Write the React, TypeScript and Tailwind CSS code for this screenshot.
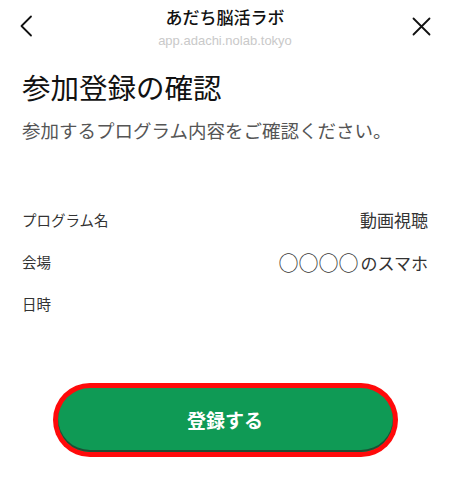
const rows = [
  { label: "プログラム名", value: <>動画視聴</> },
  {
    label: "会場",
    value: (
      <>
        <span className="mr-[2px] align-middle text-[20px] leading-[22px]">○○○○</span>
        <span className="align-middle">のスマホ</span>
      </>
    ),
  },
  { label: "日時", value: null },
]

export default function App() {
  return (
    <div className="min-h-[500px] w-[450px] bg-white font-['Noto_Sans_CJK_JP',sans-serif] text-[#222]">
      <header className="flex items-start justify-between">
        <div className="flex w-[60px] pl-[19px] pt-[15px]">
          <svg width="14" height="22" viewBox="0 0 14 22" fill="none">
            <path d="M12 1.5 L2.5 11 L12 20.5" stroke="#111" strokeWidth="1.8" strokeLinecap="round" strokeLinejoin="round" />
          </svg>
        </div>
        <div className="flex flex-col items-center pt-[7px]">
          <div className="text-[17px] font-medium leading-[20px] text-[#111]">あだち脳活ラボ</div>
          <div className="mt-[6px] font-['Liberation_Sans',sans-serif] text-[13px] leading-[16px] text-[#c9c9c9]">
            app.adachi.nolab.tokyo
          </div>
        </div>
        <div className="flex w-[60px] justify-end pr-[19px] pt-[17px]">
          <svg width="19" height="19" viewBox="0 0 19 19" fill="none">
            <path d="M1.5 1.5 L17.5 17.5 M17.5 1.5 L1.5 17.5" stroke="#111" strokeWidth="1.8" strokeLinecap="round" />
          </svg>
        </div>
      </header>

      <main className="px-[22px]">
        <h1 className="mt-[20px] text-[28.5px] font-normal leading-[36px] text-[#111]">参加登録の確認</h1>
        <p className="mt-[12px] text-[18.5px] leading-[26px] text-[#555]">参加するプログラム内容をご確認ください。</p>

        <dl className="mt-[66px] flex flex-col gap-[20px]">
          {rows.map((row) => (
            <div key={row.label} className="flex h-[22px] items-center justify-between">
              <dt className="text-[14.5px] leading-[22px] text-[#333]">{row.label}</dt>
              <dd className="text-[17px] leading-[22px] text-[#333]">{row.value}</dd>
            </div>
          ))}
        </dl>

        <div className="mt-[68px] flex justify-center">
          <div className="w-[345px] rounded-full bg-[#ff0a0a] p-[5px]">
            <button className="flex h-[64px] w-full items-center justify-center rounded-full bg-[#0f9a55] text-[19px] font-bold text-white shadow-[inset_0_-2px_0_#1f4d33]">
              登録する
            </button>
          </div>
        </div>
      </main>
    </div>
  )
}
